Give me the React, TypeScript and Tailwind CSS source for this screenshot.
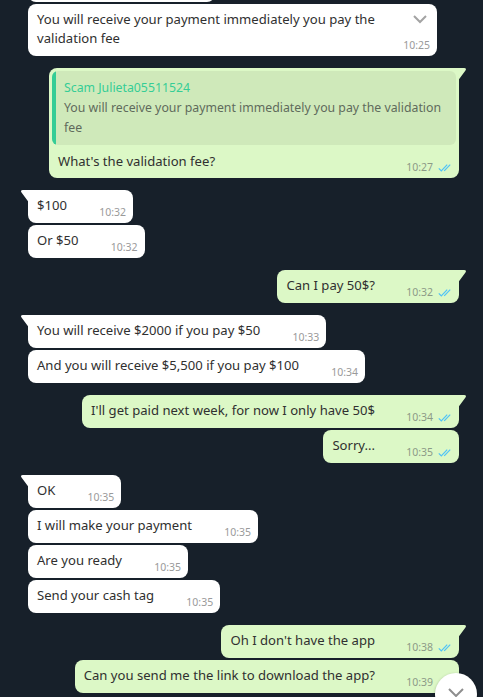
import React from "react";

type Msg = {
  text: React.ReactNode;
  time: string;
  out?: boolean;
  tail?: boolean;
  gap: "group" | "same";
};

const messages: Msg[] = [
  { text: "$100", time: "10:32", tail: true, gap: "group" },
  { text: "Or $50", time: "10:32", gap: "same" },
  { text: "Can I pay 50$?", time: "10:32", out: true, tail: true, gap: "group" },
  { text: "You will receive $2000 if you pay $50", time: "10:33", tail: true, gap: "group" },
  { text: "And you will receive $5,500 if you pay $100", time: "10:34", gap: "same" },
  { text: "I'll get paid next week, for now I only have 50$", time: "10:34", out: true, tail: true, gap: "group" },
  { text: "Sorry...", time: "10:35", out: true, gap: "same" },
  { text: "OK", time: "10:35", tail: true, gap: "group" },
  { text: "I will make your payment", time: "10:35", gap: "same" },
  { text: "Are you ready", time: "10:35", gap: "same" },
  { text: "Send your cash tag", time: "10:35", gap: "same" },
  { text: "Oh I don't have the app", time: "10:38", out: true, tail: true, gap: "group" },
  { text: "Can you send me the link to download the app?", time: "10:39", out: true, gap: "same" },
];

const DoubleCheck = () => (
  <svg width="13" height="8" viewBox="0 0 13 8" fill="none" stroke="#4fc3f7" strokeWidth="1.2">
    <path d="M0.8 4.3 L3.3 6.9 L9.2 0.7" />
    <path d="M6.2 6.9 L12.2 0.7" />
  </svg>
);

const Tail = ({ out }: { out?: boolean }) =>
  out ? (
    <svg className="absolute top-[-1px] right-[-8px]" width="8" height="13" viewBox="0 0 8 13">
      <path fill="#dcf8c6" d="M5.188 1H0v11.193l6.467-8.625C7.526 2.156 6.958 1 5.188 1z" />
    </svg>
  ) : (
    <svg className="absolute top-[-1px] left-[-8px]" width="8" height="13" viewBox="0 0 8 13">
      <path fill="#ffffff" d="M1.533 3.568L8 12.193V1H2.812C1.042 1 .474 2.156 1.533 3.568z" />
    </svg>
  );

const Meta = ({ time, out }: { time: string; out?: boolean }) => (
  <span
    className={`absolute bottom-[3px] flex items-center gap-[5px] text-[10.5px] leading-[15px] ${
      out ? "right-[8px] text-[#8c9a86]" : "right-[7px] text-[#9a9a9a]"
    }`}
  >
    {time}
    {out && <DoubleCheck />}
  </span>
);

const Bubble = ({ m }: { m: Msg }) => (
  <div className={`flex ${m.out ? "justify-end" : "justify-start"} ${m.gap === "group" ? "mt-[12px]" : "mt-[2px]"}`}>
    <div
      className={`relative rounded-[8px] pl-[9px] pr-[7px] pt-[6px] pb-[8px] text-[13.1px] leading-[19px] text-[#303030] ${
        m.out ? "bg-[#dcf8c6]" : "bg-white"
      } ${m.tail ? (m.out ? "rounded-tr-none" : "rounded-tl-none") : ""}`}
    >
      {m.tail && <Tail out={m.out} />}
      <span>{m.text}</span>
      <span className={`inline-block ${m.out ? "w-[77px]" : "w-[59px]"}`} />
      <Meta time={m.time} out={m.out} />
    </div>
  </div>
);

export default function App() {
  return (
    <div className="relative h-[697px] w-[483px] overflow-hidden bg-[#17202a] font-['Noto_Sans','Open_Sans',sans-serif]">
      <div className="flex flex-col pl-[28px] pr-[24px]">
        {/* bottom of the message above, cut off by the top edge */}
        <div className="flex -mt-[31px]">
          <div className="h-[33px] w-[187px] rounded-[8px] bg-white" />
        </div>

        <div className="mt-[2px] flex">
          <div className="relative w-[409px] rounded-[8px] bg-white pl-[9px] pr-[7px] pt-[6px] pb-[8px] text-[13.1px] leading-[19px] text-[#303030]">
            You will receive your payment immediately you pay the
            <br />
            validation fee
            <svg className="absolute right-[10px] top-[11px]" width="14" height="9" viewBox="0 0 14 9" fill="none" stroke="#a3a3a3" strokeWidth="2">
              <path d="M1 1 L7 7 L13 1" />
            </svg>
            <Meta time="10:25" />
          </div>
        </div>

        <div className="mt-[12px] flex justify-end">
          <div className="relative w-[410px] rounded-[8px] rounded-tr-none bg-[#dcf8c6] p-[3px] pb-[7px] text-[#303030]">
            <Tail out />
            <div className="flex overflow-hidden rounded-[6px] bg-[#cfe9ba]">
              <div className="w-[4px] shrink-0 bg-[#35cd96]" />
              <div className="whitespace-nowrap pl-[8px] pr-[6px] pt-[7px] pb-[7px] text-[12.3px] leading-[20px]">
                <div className="text-[#35cd96]">Scam Julieta05511524</div>
                <div className="text-[#5f6b5c]">
                  You will receive your payment immediately you pay the validation
                  <br />
                  fee
                </div>
              </div>
            </div>
            <div className="pl-[6px] pt-[7px] text-[13.1px] leading-[19px]">What's the validation fee?</div>
            <Meta time="10:27" out />
          </div>
        </div>

        {messages.map((m, i) => (
          <Bubble key={i} m={m} />
        ))}
      </div>

      <div className="absolute right-[6px] top-[673px] flex h-[42px] w-[42px] items-start justify-center rounded-full bg-white shadow-[0_1px_3px_rgba(0,0,0,0.3)]">
        <svg className="mt-[15px]" width="16" height="9" viewBox="0 0 16 9" fill="none" stroke="#8e8e8e" strokeWidth="2">
          <path d="M1 1 L8 8 L15 1" />
        </svg>
      </div>
    </div>
  );
}
